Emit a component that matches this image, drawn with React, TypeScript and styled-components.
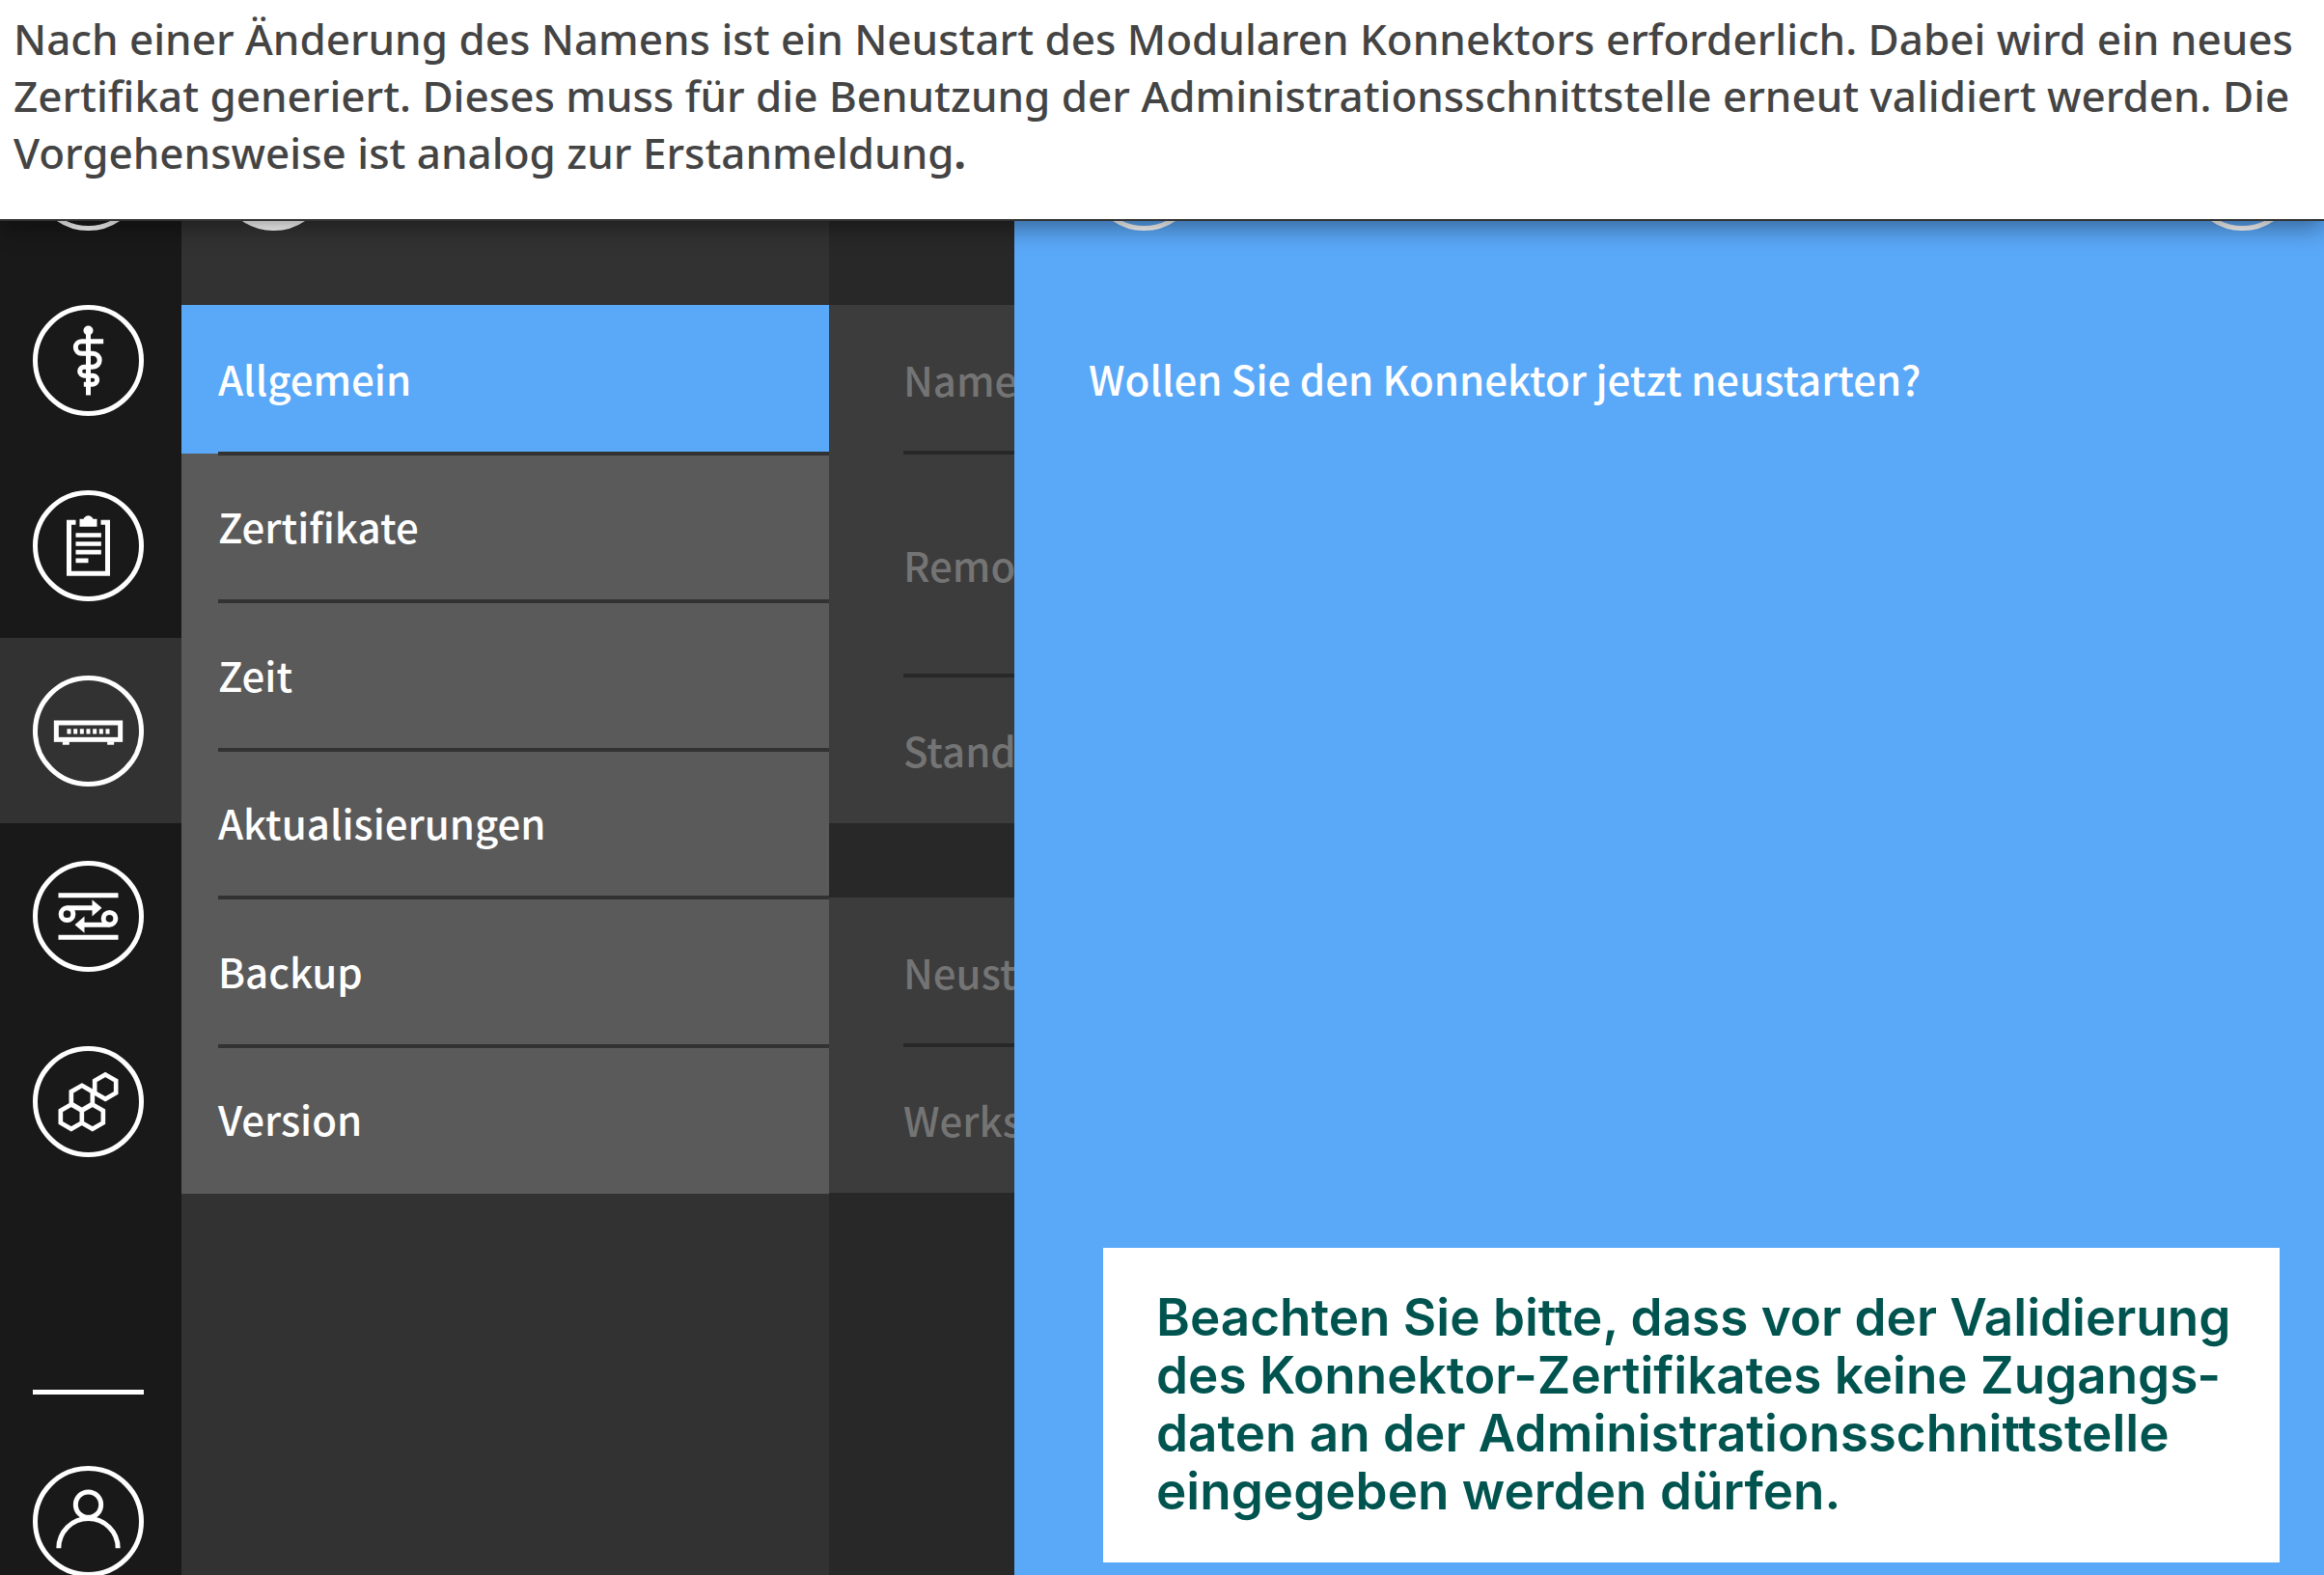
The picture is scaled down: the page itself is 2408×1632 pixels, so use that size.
import React from "react";
import styled, { createGlobalStyle, css } from "styled-components";

const color = {
  blue: "#5aa8f8",
  rail: "#191919",
  railActive: "#323232",
  menuBack: "#323232",
  menuRow: "#5a5a5a",
  detailBack: "#282828",
  detailRow: "#3c3c3c",
  detailText: "#747474",
  intro: "#444444",
  note: "#005450",
};

const uiFont = `"Noto Sans CJK SC", "Noto Sans", sans-serif`;

const GlobalStyle = createGlobalStyle`
  *, *::before, *::after { box-sizing: border-box; }
  body { margin: 0; background: #ffffff; }
  button { border: 0; margin: 0; padding: 0; background: none; color: inherit; font: inherit; cursor: pointer; }
`;

const Page = styled.div`
  display: flex;
  flex-direction: column;
  height: 100vh;
`;

const Intro = styled.header`
  position: relative;
  z-index: 2;
  flex: none;
  padding: 11px 14px 39px;
  border-bottom: 2px solid #333333;
  background: #ffffff;
  box-shadow: 0 6px 24px rgba(0, 0, 0, 0.42);
`;

const IntroText = styled.p`
  margin: 0;
  color: ${color.intro};
  font: 500 44px/59px "Noto Sans", sans-serif;
`;

const Workspace = styled.main`
  display: grid;
  grid-template-columns: 188px 671px 192px minmax(0, 1fr);
  flex: 1;
  min-height: 0;
  overflow: hidden;
  font: 500 42px/60px ${uiFont};
`;

const Column = styled.div<{ $back: string }>`
  display: flex;
  flex-direction: column;
  min-width: 0;
  min-height: 0;
  overflow: hidden;
  background: ${(p) => p.$back};
`;

/* The header row is scrolled up, so only the lower rim of its round buttons shows. */
const ScrolledBar = styled.div<{ $height: number; $inset: string }>`
  display: flex;
  flex: none;
  justify-content: space-between;
  align-items: flex-start;
  height: ${(p) => p.$height}px;
  padding: ${(p) => p.$inset};
  overflow: hidden;

  & > * {
    margin-top: -105px;
  }
`;

const RoundButton = styled.button<{ $filled?: boolean }>`
  display: block;
  flex: none;
  width: 115px;
  height: 115px;
  border: 5px solid #ffffff;
  border-radius: 50%;
  color: #ffffff;
  background: ${(p) => (p.$filled ? "#ffffff" : "transparent")};

  svg {
    display: block;
    margin: -5px;
    width: 115px;
    height: 115px;
  }
`;

const RailSlot = styled.div<{ $active?: boolean }>`
  display: flex;
  flex: none;
  align-items: center;
  height: 192px;
  padding-left: 34px;
  background: ${(p) => (p.$active ? color.railActive : "transparent")};
`;

const RailFooter = styled.div`
  display: flex;
  flex-direction: column;
  gap: 74px;
  margin: auto 0 -2px 34px;
`;

const RailRule = styled.hr`
  width: 115px;
  height: 5px;
  margin: 0;
  border: 0;
  background: #ffffff;
`;

const rule = css`
  &:not(:last-child)::after {
    content: "";
    position: absolute;
    right: 0;
    bottom: -2px;
    height: 4px;
    z-index: 1;
  }
`;

const Menu = styled.nav`
  display: grid;
  grid-auto-rows: 1fr;
  flex: none;
  height: 921px;
`;

const MenuItem = styled.button<{ $active?: boolean }>`
  position: relative;
  padding: 0 38px 2px;
  color: #ffffff;
  text-align: left;
  background: ${(p) => (p.$active ? color.blue : color.menuRow)};
  ${rule}

  &::after {
    left: 38px;
    background: ${color.menuBack};
  }
`;

const Details = styled.div`
  display: flex;
  flex-direction: column;
  gap: 77px;
`;

const DetailGroup = styled.div`
  background: ${color.detailRow};
`;

const DetailRow = styled.div<{ $tall?: boolean }>`
  position: relative;
  display: flex;
  align-items: center;
  height: ${(p) => (p.$tall ? 231 : 153)}px;
  padding-left: 77px;
  color: ${color.detailText};
  white-space: nowrap;
  ${rule}

  &::after {
    left: 77px;
    background: ${color.detailBack};
  }
`;

const Question = styled.p`
  margin: 0;
  padding: 46px 77px;
  color: #ffffff;
`;

const Note = styled.aside`
  margin: auto 46px 13px 92px;
  padding: 42px 40px 44px 55px;
  color: ${color.note};
  background: #ffffff;
  font: 600 53px/60px Inter, sans-serif;
`;

const Drawing = ({ children }: { children: React.ReactNode }) => (
  <svg viewBox="-172.5 -172.5 345 345" fill="none" stroke="currentColor" strokeWidth="15" aria-hidden="true">
    {children}
  </svg>
);

const StaffIcon = () => (
  <Drawing>
    <circle cx="0" cy="-93" r="15" fill="currentColor" stroke="none" />
    <path d="M0-95V108" />
    <path d="M47-59H-21a18.500 18.500 0 0 0 0 37H14a21 21 0 0 1 0 42H-13a13.500 13.500 0 0 0 0 27H14a13.500 13.500 0 0 1 0 27H-14" />
  </Drawing>
);

const ClipboardIcon = () => (
  <Drawing>
    <path d="M-39-73H-60V86H60V-73H39" />
    <path d="M-27-59V-83H-15C-12-90-6-94 0-94S12-90 15-83H27V-59Z" fill="currentColor" stroke="none" />
    <path d="M-39-33H40M-39-6H40M-39 20H40M-39 46H0" strokeWidth="14" />
  </Drawing>
);

const ConnectorIcon = () => (
  <Drawing>
    <rect x="-99.500" y="-25.500" width="199" height="52" />
    <path d="M-80 38H-59M59 38H80" strokeWidth="10" />
    <path d="M-66 1H66" strokeWidth="16" strokeDasharray="12 8" />
  </Drawing>
);

const TransferIcon = () => (
  <Drawing>
    <path d="M-93-65H93M-93 65H93" />
    <circle cx="-66" cy="-7" r="19" />
    <circle cx="66" cy="7" r="19" />
    <path d="M-66-26H20M66 26H-20" />
    <path d="M12-52L42-26L12 0ZM-12 52L-42 26L-12 0Z" fill="currentColor" stroke="none" />
  </Drawing>
);

const hexagon = (x: number, y: number) => `M${x} ${y - 38}l33 19v38l-33 19l-33-19v-38Z`;

const HexagonsIcon = () => (
  <Drawing>
    <path d={[hexagon(53, -46), hexagon(-20, -12), hexagon(-53, 47), hexagon(13, 47)].join("")} strokeWidth="14" />
  </Drawing>
);

const UserIcon = () => (
  <Drawing>
    <circle cx="0" cy="-52" r="39.500" />
    <path d="M-92 83a92 92 0 0 1 184 0" />
  </Drawing>
);

const railItems = [
  { label: "Praxis", icon: <StaffIcon /> },
  { label: "Protokolle", icon: <ClipboardIcon /> },
  { label: "System", icon: <ConnectorIcon />, active: true },
  { label: "Netzwerk", icon: <TransferIcon /> },
  { label: "Module", icon: <HexagonsIcon /> },
];

const menuItems = ["Allgemein", "Zertifikate", "Zeit", "Aktualisierungen", "Backup", "Version"];

const detailGroups = [
  [{ label: "Name" }, { label: "Remo", tall: true }, { label: "Stand" }],
  [{ label: "Neust" }, { label: "Werks" }],
];

export default function App() {
  return (
    <Page>
      <GlobalStyle />
      <Intro>
        <IntroText>
          Nach einer Änderung des Namens ist ein Neustart des Modularen Konnektors erforderlich. Dabei wird ein neues
          Zertifikat generiert. Dieses muss für die Benutzung der Administrationsschnittstelle erneut validiert werden.
          Die Vorgehensweise ist analog zur Erstanmeldung<b>.</b>
        </IntroText>
      </Intro>

      <Workspace>
        <Column as="nav" $back={color.rail}>
          <ScrolledBar $height={48} $inset="0 39px 0 34px">
            <RoundButton aria-label="Start" />
          </ScrolledBar>
          {railItems.map((item) => (
            <RailSlot key={item.label} $active={item.active}>
              <RoundButton aria-label={item.label}>{item.icon}</RoundButton>
            </RailSlot>
          ))}
          <RailFooter>
            <RailRule />
            <RoundButton aria-label="Benutzer">
              <UserIcon />
            </RoundButton>
          </RailFooter>
        </Column>

        <Column $back={color.menuBack}>
          <ScrolledBar $height={87} $inset="0 38px">
            <RoundButton $filled aria-label="Zurück" />
          </ScrolledBar>
          <Menu>
            {menuItems.map((label, i) => (
              <MenuItem key={label} $active={i === 0}>
                {label}
              </MenuItem>
            ))}
          </Menu>
        </Column>

        <Column $back={color.detailBack}>
          <ScrolledBar $height={87} $inset="0" />
          <Details>
            {detailGroups.map((rows, i) => (
              <DetailGroup key={i}>
                {rows.map((row: { label: string; tall?: boolean }) => (
                  <DetailRow key={row.label} $tall={row.tall}>
                    {row.label}
                  </DetailRow>
                ))}
              </DetailGroup>
            ))}
          </Details>
        </Column>

        <Column $back={color.blue}>
          <ScrolledBar $height={87} $inset="0 27px 0 77px">
            <RoundButton aria-label="Abbrechen" />
            <RoundButton aria-label="Bestätigen" />
          </ScrolledBar>
          <Question>Wollen Sie den Konnektor jetzt neustarten?</Question>
          <Note>
            Beachten Sie bitte, dass vor der Validierung des Konnektor-Zertifikates keine Zugangs&shy;daten an der
            Administrationsschnittstelle eingegeben werden dürfen.
          </Note>
        </Column>
      </Workspace>
    </Page>
  );
}
